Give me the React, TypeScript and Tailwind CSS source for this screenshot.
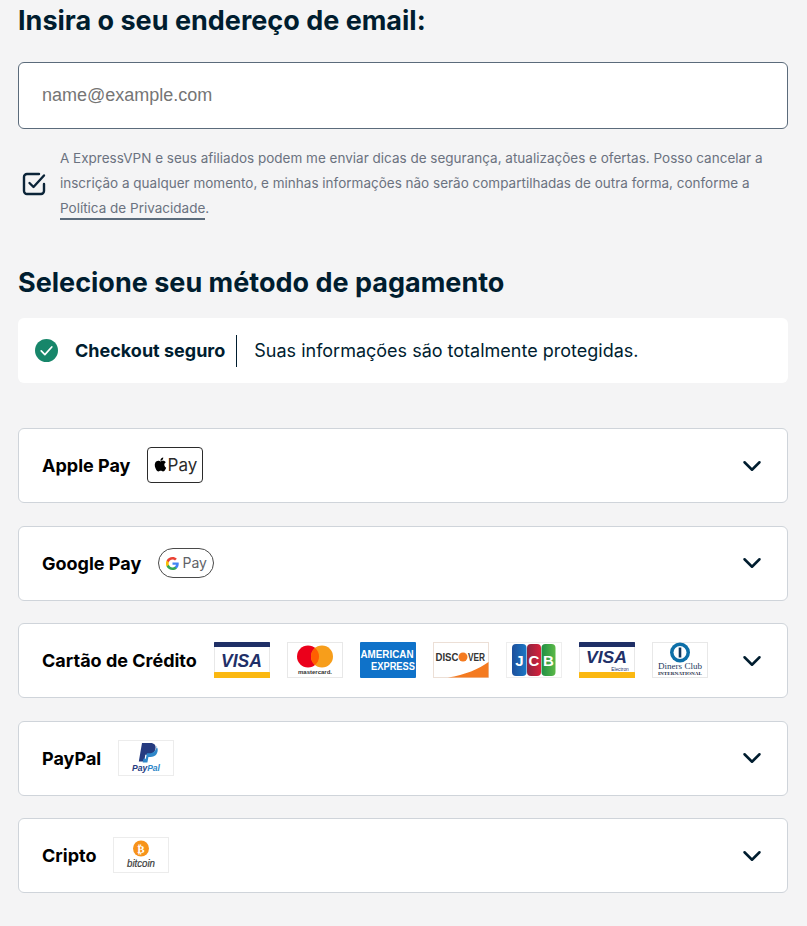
import { ChevronDown } from "lucide-react";
import type { ReactNode } from "react";

const font = { fontFamily: "Inter, sans-serif" };

function LogoBox({ children }: { children: ReactNode }) {
  return (
    <svg viewBox="0 0 56 36" className="h-9 w-14 shrink-0">
      {children}
    </svg>
  );
}

function Visa({ electron = false }: { electron?: boolean }) {
  return (
    <LogoBox>
      <rect x="0.5" y="0.5" width="55" height="35" fill="#fff" stroke="#e8e8e8" />
      <rect width="56" height="5" rx="0.5" fill="#1f2f66" />
      <rect y="30" width="56" height="6" rx="0.5" fill="#fbb811" />
      <text x="7" y={electron ? 21 : 24.5} textLength="41" lengthAdjust="spacingAndGlyphs" fontFamily="Liberation Sans" fontWeight="700" fontStyle="italic" fontSize={electron ? 16 : 18.5} fill="#1f3068">
        VISA
      </text>
      {electron && (
        <text x="41" y="28.5" textAnchor="middle" fontFamily="Liberation Sans" fontSize="4.8" fill="#1f3068">
          Electron
        </text>
      )}
    </LogoBox>
  );
}

function Mastercard() {
  return (
    <LogoBox>
      <rect x="0.5" y="0.5" width="55" height="35" fill="#fff" stroke="#e8e8e8" />
      <circle cx="21" cy="14.5" r="11" fill="#eb001b" />
      <circle cx="35" cy="14.5" r="11" fill="#f79e1b" />
      <path d="M28 6a11 11 0 0 1 0 17a11 11 0 0 1 0-17z" fill="#ff5f00" />
      <text x="28" y="31.5" textAnchor="middle" textLength="34" lengthAdjust="spacingAndGlyphs" fontFamily="Liberation Sans" fontWeight="700" fontSize="5.6" fill="#333">
        mastercard.
      </text>
    </LogoBox>
  );
}

function Amex() {
  return (
    <LogoBox>
      <rect width="56" height="36" rx="1" fill="#0f72c9" />
      <text x="0.5" y="15.5" textLength="53" lengthAdjust="spacingAndGlyphs" fontFamily="Liberation Sans" fontWeight="700" fontSize="10.5" fill="#fff">
        AMERICAN
      </text>
      <text x="11" y="28" textLength="44" lengthAdjust="spacingAndGlyphs" fontFamily="Liberation Sans" fontWeight="700" fontSize="10.5" fill="#fff">
        EXPRESS
      </text>
    </LogoBox>
  );
}

function Discover() {
  return (
    <LogoBox>
      <rect x="0.5" y="0.5" width="55" height="35" fill="#fff" stroke="#ecdfd6" />
      <path d="M15 35.5C32 33 46 27 55.5 20v15.5z" fill="#f47a20" />
      <text x="2.5" y="18.5" textLength="23" lengthAdjust="spacingAndGlyphs" fontFamily="Liberation Sans" fontWeight="700" fontSize="10" fill="#333">
        DISC
      </text>
      <circle cx="30" cy="15" r="4.5" fill="#f47a20" />
      <text x="35" y="18.5" textLength="17" lengthAdjust="spacingAndGlyphs" fontFamily="Liberation Sans" fontWeight="700" fontSize="10" fill="#333">
        VER
      </text>
    </LogoBox>
  );
}

function Jcb() {
  return (
    <LogoBox>
      <defs>
        <linearGradient id="jcbBlue" x1="0" x2="1" y1="0" y2="0">
          <stop offset="0" stopColor="#1d4f9c" />
          <stop offset="1" stopColor="#1b77c4" />
        </linearGradient>
        <linearGradient id="jcbRed" x1="0" x2="1" y1="0" y2="0">
          <stop offset="0" stopColor="#8d2440" />
          <stop offset="1" stopColor="#d8203c" />
        </linearGradient>
        <linearGradient id="jcbGreen" x1="0" x2="1" y1="0" y2="0">
          <stop offset="0" stopColor="#1f8f45" />
          <stop offset="1" stopColor="#5cb947" />
        </linearGradient>
      </defs>
      <rect x="0.5" y="0.5" width="55" height="35" fill="#fff" stroke="#eeeeee" />
      <rect x="6" y="2" width="14.5" height="32" rx="4" fill="url(#jcbBlue)" />
      <rect x="21" y="2" width="14" height="32" rx="4" fill="url(#jcbRed)" />
      <rect x="35.5" y="2" width="14" height="32" rx="4" fill="url(#jcbGreen)" />
      <text x="13.5" y="24" textAnchor="middle" fontFamily="Liberation Sans" fontWeight="700" fontSize="15" fill="#fff">
        J
      </text>
      <text x="28" y="24" textAnchor="middle" fontFamily="Liberation Sans" fontWeight="700" fontSize="15" fill="#fff">
        C
      </text>
      <text x="42.5" y="24" textAnchor="middle" fontFamily="Liberation Sans" fontWeight="700" fontSize="15" fill="#fff">
        B
      </text>
    </LogoBox>
  );
}

function Diners() {
  return (
    <LogoBox>
      <rect x="0.5" y="0.5" width="55" height="35" fill="#fff" stroke="#e8e8e8" />
      <circle cx="28" cy="10.5" r="10" fill="#0d6fa8" />
      <circle cx="28" cy="10.5" r="6.5" fill="#fff" />
      <rect x="26.7" y="5.5" width="2.6" height="10" fill="#12385f" />
      <text x="6" y="26.5" textLength="44" lengthAdjust="spacingAndGlyphs" fontFamily="Liberation Serif" fontSize="8.5" fill="#233a5e">
        Diners Club
      </text>
      <text x="6" y="33" textLength="44" lengthAdjust="spacingAndGlyphs" fontFamily="Liberation Serif" fontWeight="700" fontSize="4.5" fill="#1c2a44">
        INTERNATIONAL
      </text>
    </LogoBox>
  );
}

function PayPalLogo() {
  return (
    <LogoBox>
      <rect x="0.5" y="0.5" width="55" height="35" fill="#fff" stroke="#ececec" />
      <path d="M24 3h8.500c3.800 0 5.700 2.300 5 5.800-.8 4-3.600 6-7.400 6h-2.800l-1.100 6.600h-5.400z" fill="#253b80" />
      <path d="M38 6.500c1.500 1 2 2.700 1.600 4.700-.7 3.700-3.200 5.700-6.800 5.700h-2.400l-1 5.600h-4.700l.7-3.700h2.400l1.100-5.500h2.800c3.600 0 6.100-2.800 7.300-6.800z" fill="#2f87c9" />
      <text x="14" y="30.500" textLength="28" lengthAdjust="spacingAndGlyphs" fontFamily="Liberation Sans" fontWeight="700" fontStyle="italic" fontSize="8.500" fill="#253b80">
        Pay<tspan fill="#2f87c9">Pal</tspan>
      </text>
    </LogoBox>
  );
}

function BitcoinLogo() {
  return (
    <LogoBox>
      <rect x="0.5" y="0.5" width="55" height="35" fill="#fff" stroke="#ececec" />
      <circle cx="28" cy="11.500" r="8" fill="#f7931a" />
      <text x="28" y="15.500" textAnchor="middle" fontFamily="DejaVu Sans" fontWeight="700" fontSize="11" fill="#fff">
        ₿
      </text>
      <text x="14" y="29.500" textLength="28" lengthAdjust="spacingAndGlyphs" fontFamily="Liberation Sans" fontStyle="italic" fontSize="10" stroke="#3a3a3a" strokeWidth="0.2" fill="#3a3a3a">
        bitcoin
      </text>
    </LogoBox>
  );
}

function ApplePayLogo() {
  return (
    <div className="flex h-9 w-14 shrink-0 items-center justify-center gap-px rounded-[4px] border border-[#2b2b2b] bg-white">
      <svg viewBox="2 1 19 22" className="-mt-px h-[15px] w-[13px]" fill="#000">
        <path d="M17.05 12.54c-.03-2.6 2.12-3.85 2.22-3.91-1.21-1.77-3.09-2.01-3.76-2.04-1.6-.16-3.12.94-3.93.94-.81 0-2.06-.92-3.39-.89-1.74.03-3.35 1.01-4.25 2.57-1.81 3.14-.46 7.8 1.3 10.35.86 1.25 1.89 2.65 3.24 2.6 1.3-.05 1.79-.84 3.36-.84 1.57 0 2.01.84 3.39.81 1.4-.02 2.28-1.27 3.14-2.53.99-1.45 1.4-2.85 1.42-2.93-.03-.01-2.71-1.04-2.74-4.13zM14.47 4.89c.72-.87 1.2-2.08 1.07-3.29-1.03.04-2.29.69-3.03 1.56-.66.77-1.24 2-1.09 3.18 1.15.09 2.33-.58 3.05-1.45z" />
      </svg>
      <span className="text-[17px] leading-none text-[#2b2b2b]">Pay</span>
    </div>
  );
}

function GooglePayLogo() {
  return (
    <div className="flex h-[30px] w-14 shrink-0 items-center justify-center gap-1 rounded-full border border-[#4a4a4a] bg-white">
      <svg viewBox="0 0 24 24" className="h-[13px] w-[13px]">
        <path fill="#4285F4" d="M23.500 12.300c0-.8-.1-1.600-.2-2.300H12v4.500h6.500c-.3 1.500-1.100 2.800-2.400 3.600v3h3.900c2.200-2.100 3.500-5.100 3.500-8.800z" />
        <path fill="#34A853" d="M12 24c3.200 0 6-1.100 8-2.900l-3.900-3c-1.100.7-2.500 1.200-4.100 1.200-3.100 0-5.800-2.100-6.700-5H1.200v3.100C3.200 21.300 7.300 24 12 24z" />
        <path fill="#FBBC05" d="M5.300 14.300c-.5-1.500-.5-3.100 0-4.600V6.600H1.200c-1.700 3.400-1.700 7.400 0 10.800z" />
        <path fill="#EA4335" d="M12 4.800c1.800 0 3.400.6 4.600 1.800l3.400-3.400C18 1.200 15.200 0 12 0 7.300 0 3.200 2.700 1.200 6.600l4.100 3.100c1-2.900 3.600-4.900 6.700-4.900z" />
      </svg>
      <span className="text-[14px] leading-none text-[#5f6368]">Pay</span>
    </div>
  );
}

function MethodCard({ label, gap, children }: { label: string; gap: string; children: ReactNode }) {
  return (
    <div className="flex h-[75px] items-center rounded-[6px] border border-[#cfd4da] bg-white pl-[23px] pr-5">
      <span className="text-[18px] font-bold text-black">{label}</span>
      <div className={`flex flex-1 items-center ${gap}`}>{children}</div>
      <ChevronDown className="ml-auto h-[30px] w-[30px] text-[#001d2f]" strokeWidth={2} />
    </div>
  );
}

export default function App() {
  return (
    <div className="min-h-[926px] bg-[#f4f4f5] pl-[18px] pr-[19px] pt-[4px]" style={font}>
      <h1 className="text-[27px] font-bold leading-[34px] text-[#001d2f]">Insira o seu endereço de email:</h1>

      <div className="mt-[24px] flex h-[67px] items-center rounded-[6px] border border-[#5b6b7b] bg-white pl-[23px]">
        <span className="text-[18px] text-[#757575]" style={{ fontFamily: "Liberation Sans, sans-serif" }}>
          name@example.com
        </span>
      </div>

      <div className="mt-[17px] flex items-center">
        <svg viewBox="0 0 24 24" className="ml-1 h-6 w-6 shrink-0" fill="none" stroke="#0b2438" strokeWidth="2.4" strokeLinecap="round" strokeLinejoin="round">
          <path d="M22 12v7a3 3 0 0 1-3 3H5a3 3 0 0 1-3-3V5a3 3 0 0 1 3-3h12" />
          <path d="M7.500 11l4 4L22 3.500" />
        </svg>
        <p className="ml-[14px] text-[13.5px] leading-[25px] text-[#6b7280]">
          A ExpressVPN e seus afiliados podem me enviar dicas de segurança, atualizações e ofertas. Posso cancelar a inscrição a qualquer momento, e minhas informações não serão compartilhadas de outra forma, conforme a{" "}
          <span className="border-b-2 border-[#5b6b7b] pb-[2px]">Política de Privacidade</span>.
        </p>
      </div>

      <h2 className="mt-[45px] text-[27px] font-bold leading-[34px] text-[#001d2f]">Selecione seu método de pagamento</h2>

      <div className="mt-[18px] flex h-[65px] items-center rounded-[6px] bg-white pl-[17px]">
        <svg viewBox="0 0 24 24" className="h-[23px] w-[23px] shrink-0">
          <circle cx="12" cy="12" r="12" fill="#17866a" />
          <path d="M6.500 12.500l3.800 3.800 7.200-8" fill="none" stroke="#fff" strokeWidth="1.800" strokeLinecap="round" strokeLinejoin="round" />
        </svg>
        <span className="ml-[17px] text-[18px] font-bold text-[#001d2f]">Checkout seguro</span>
        <div className="ml-[11px] h-8 w-px bg-[#001d2f]" />
        <span className="ml-[17px] text-[18px] text-[#001d2f]">Suas informações são totalmente protegidas.</span>
      </div>

      <div className="mt-[45px] flex flex-col gap-[22.5px]">
        <MethodCard label="Apple Pay" gap="ml-[17px] -mt-px">
          <ApplePayLogo />
        </MethodCard>
        <MethodCard label="Google Pay" gap="ml-[17px]">
          <GooglePayLogo />
        </MethodCard>
        <MethodCard label="Cartão de Crédito" gap="ml-[17px] -mt-px gap-[17px]">
          <Visa />
          <Mastercard />
          <Amex />
          <Discover />
          <Jcb />
          <Visa electron />
          <Diners />
        </MethodCard>
        <MethodCard label="PayPal" gap="ml-[17px]">
          <PayPalLogo />
        </MethodCard>
        <MethodCard label="Cripto" gap="ml-[17px] -mt-px">
          <BitcoinLogo />
        </MethodCard>
      </div>
    </div>
  );
}
